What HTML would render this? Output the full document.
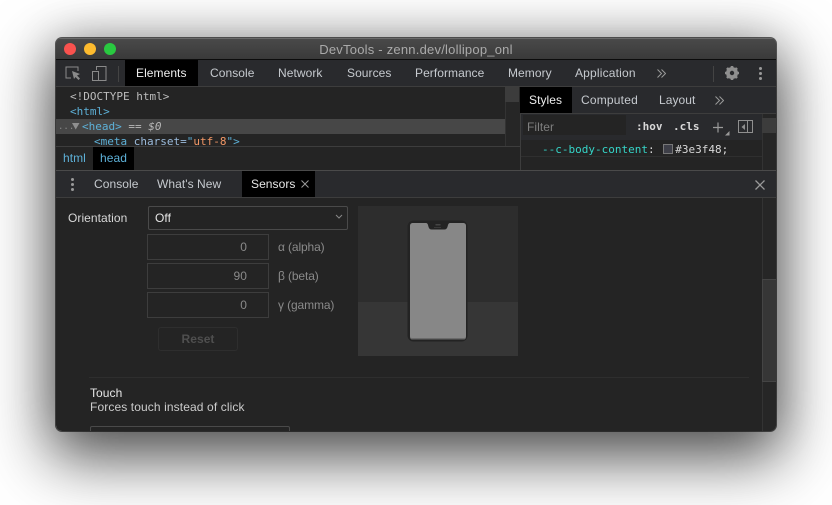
<!DOCTYPE html>
<html><head><meta charset="utf-8"><style>
html,body{margin:0;padding:0;width:832px;height:505px;overflow:hidden;background:#fff}
body{position:relative;font-family:"Liberation Sans",sans-serif;font-size:12px;color:#c6cacf}
div,span.a,svg{position:absolute}
.t{white-space:nowrap;line-height:14px;letter-spacing:.06px}
.m{font-family:"DejaVu Sans Mono","Liberation Mono",monospace;font-size:11px;white-space:nowrap;line-height:14px}
#win{left:56px;top:38px;width:720px;height:393px;border-radius:6px;overflow:hidden;background:#242424}
#shadow{left:56px;top:38px;width:720px;height:393px;border-radius:6px;box-shadow:0 0 0 1px rgba(0,0,0,.6),0 22px 62px 6px rgba(0,0,0,.66),0 0 45px rgba(0,0,0,.16)}
.b{background:#000}
.tag{color:#5db0d7}
.inp{border:1px solid #3d3d3d;box-sizing:border-box;background:#242424}
.g{letter-spacing:-.12px}
</style></head><body>
<div id="shadow"></div>
<div id="win">
<div style="left:0;top:0;width:720px;height:21px;background:linear-gradient(#4a4a4a,#3a3a3a)"></div>
<div style="left:0;top:0;width:720px;height:1px;background:#6a6a6a"></div>
<div style="left:0;top:21px;width:720px;height:1px;background:#0c0c0c"></div>
<div style="left:8px;top:5px;width:12px;height:12px;border-radius:50%;background:#f9524e"></div>
<div style="left:28px;top:5px;width:12px;height:12px;border-radius:50%;background:#fdbb2e"></div>
<div style="left:48px;top:5px;width:12px;height:12px;border-radius:50%;background:#29c940"></div>
<div class="t" style="left:0;width:720px;top:5px;text-align:center;font-size:13px;color:#aaa;letter-spacing:.22px">DevTools - zenn.dev/lollipop_onl</div>

<div style="left:0;top:22px;width:720px;height:26px;background:#292a2d"></div>
<div style="left:0;top:48px;width:720px;height:1px;background:#3d3d3d"></div>
<svg style="left:9px;top:27px" width="18" height="17" viewBox="0 0 18 17" fill="none"><path d="M6 13H1V2h12v4" stroke="#8a8a8a"/><path d="M7 6l8 3-3 1.500 3 3-1.500 1.500-3-3L9 14z" fill="#8a8a8a"/></svg>
<svg style="left:35px;top:27px" width="16" height="17" viewBox="0 0 16 17" fill="none"><path d="M5.500 5V1.500h9.500v14H5" stroke="#8a8a8a"/><rect x="1.500" y="6.500" width="6" height="9" stroke="#8a8a8a"/></svg>
<div style="left:62px;top:28px;width:1px;height:16px;background:#444"></div>
<div class="b" style="left:69px;top:22px;width:73px;height:26px"></div>
<div class="t" style="left:80px;top:28px;color:#eee">Elements</div>
<div class="t" style="left:154px;top:28px">Console</div>
<div class="t" style="left:222px;top:28px">Network</div>
<div class="t" style="left:291px;top:28px">Sources</div>
<div class="t" style="left:359px;top:28px">Performance</div>
<div class="t" style="left:452px;top:28px">Memory</div>
<div class="t" style="left:519px;top:28px;letter-spacing:.18px">Application</div>
<svg style="left:601px;top:31px" width="9" height="9" viewBox="0 0 9 9" fill="none" stroke="#9a9a9a"><path d="M.5.500l4 4-4 4M4.500.5l4 4-4 4"/></svg>
<div style="left:657px;top:28px;width:1px;height:16px;background:#444"></div>
<svg style="left:668px;top:27px" width="16" height="16" viewBox="0 0 16 16"><circle cx="8" cy="8" r="4.500" fill="none" stroke="#8f8f8f" stroke-width="3"/><path d="M8 1v14M1 8h14M3 3l10 10M13 3L3 13" stroke="#8f8f8f" stroke-width="2.600"/><circle cx="8" cy="8" r="2.200" fill="#292a2d"/></svg>
<div style="left:703px;top:29px;width:3px;height:3px;border-radius:50%;background:#9a9a9a"></div>
<div style="left:703px;top:34px;width:3px;height:3px;border-radius:50%;background:#9a9a9a"></div>
<div style="left:703px;top:39px;width:3px;height:3px;border-radius:50%;background:#9a9a9a"></div>

<div style="left:0;top:49px;width:449px;height:59px;background:#242424;overflow:hidden">
<div style="left:0;top:32px;width:449px;height:15px;background:#474747"></div>
<div class="m" style="left:14px;top:3px;color:#bdbdbd">&lt;!DOCTYPE html&gt;</div>
<div class="m tag" style="left:14px;top:18px">&lt;html&gt;</div>
<div class="m" style="left:2px;top:33px;color:#888;font-size:9px">...</div>
<svg style="left:16px;top:36px" width="8" height="7"><path d="M0 0h7.500L3.700 6.500z" fill="#8f8f8f"/></svg>
<div class="m" style="left:26px;top:33px;color:#b8b8b8"><span class="tag">&lt;head&gt;</span> == <i>$0</i></div>
<div class="m" style="left:38px;top:48px;color:#9bbbdc"><span class="tag">&lt;meta</span> charset=<span class="tag">"</span><span style="color:#f29766">utf-8</span><span class="tag">"&gt;</span></div>
</div>
<div style="left:449px;top:49px;width:15px;height:59px;background:#262626;border-left:1px solid #333;box-sizing:border-box"></div>
<div style="left:449px;top:49px;width:14px;height:15px;background:#3c3c3c"></div>
<div style="left:0;top:108px;width:464px;height:1px;background:#3d3d3d"></div>
<div style="left:0;top:109px;width:464px;height:23px;background:#242424"></div>
<div class="b" style="left:37px;top:109px;width:41px;height:23px"></div>
<div class="t" style="left:7px;top:113px;color:#5db0d7">html</div>
<div class="t" style="left:44px;top:113px;color:#5db0d7">head</div>

<div style="left:464px;top:49px;width:1px;height:83px;background:#3d3d3d"></div>
<div style="left:465px;top:49px;width:255px;height:26px;background:#292a2d"></div>
<div class="b" style="left:464px;top:49px;width:52px;height:26px"></div>
<div class="t" style="left:473px;top:55px;color:#eee">Styles</div>
<div class="t" style="left:525px;top:55px;letter-spacing:.2px">Computed</div>
<div class="t" style="left:603px;top:55px">Layout</div>
<svg style="left:659px;top:58px" width="9" height="9" viewBox="0 0 9 9" fill="none" stroke="#9a9a9a"><path d="M.5.500l4 4-4 4M4.500.5l4 4-4 4"/></svg>
<div style="left:465px;top:75px;width:255px;height:1px;background:#3d3d3d"></div>
<div style="left:465px;top:76px;width:241px;height:26px;background:#292a2d"></div>
<div style="left:467px;top:77px;width:103px;height:20px;background:#242424"></div>
<div class="t" style="left:471px;top:82px;color:#7f7f7f">Filter</div>
<div class="m" style="left:580px;top:82px;color:#d8d8d8;font-weight:bold">:hov</div>
<div class="m" style="left:617px;top:82px;color:#d8d8d8;font-weight:bold">.cls</div>
<svg style="left:656px;top:83px" width="18" height="16"><path d="M1 6.500h10M6 1.500v10" stroke="#9a9a9a" stroke-width="1.200"/><path d="M13 14.500h4.500V10z" fill="#9a9a9a"/></svg>
<svg style="left:682px;top:82px" width="15" height="14" fill="none"><rect x=".5" y=".5" width="14" height="12" stroke="#8f8f8f"/><path d="M9.500 1v12" stroke="#8f8f8f"/><path d="M7 4v6L3.500 7z" fill="#8f8f8f"/></svg>
<div style="left:465px;top:102px;width:241px;height:30px;background:#242424"></div>
<div class="m" style="left:486px;top:105px;color:#d8d8d8"><span style="color:#35d4c7">--c-body-content</span>: <span class="a" style="display:inline-block;position:static;width:8px;height:8px;background:#3e3f48;border:1px solid #777;vertical-align:-1px;margin:0 2px 0 2px"></span>#3e3f48;</div>
<div style="left:465px;top:118px;width:241px;height:1px;background:#2f2f2f"></div>
<div style="left:706px;top:76px;width:14px;height:56px;background:#262626;border-left:1px solid #333;box-sizing:border-box"></div>
<div style="left:706px;top:80px;width:14px;height:15px;background:#3c3c3c"></div>

<div style="left:0;top:132px;width:720px;height:1px;background:#4a4a4a"></div>
<div style="left:0;top:133px;width:720px;height:26px;background:#292a2d"></div>
<div style="left:0;top:159px;width:720px;height:1px;background:#3d3d3d"></div>
<div style="left:15px;top:140px;width:3px;height:3px;border-radius:50%;background:#9a9a9a"></div>
<div style="left:15px;top:145px;width:3px;height:3px;border-radius:50%;background:#9a9a9a"></div>
<div style="left:15px;top:150px;width:3px;height:3px;border-radius:50%;background:#9a9a9a"></div>
<div class="t" style="left:38px;top:139px">Console</div>
<div class="t" style="left:101px;top:139px">What's New</div>
<div class="b" style="left:186px;top:133px;width:73px;height:26px"></div>
<div class="t" style="left:195px;top:139px;color:#e6e6e6">Sensors</div>
<svg style="left:245px;top:142px" width="8" height="8"><path d="M.5.500l7 7M7.500.5l-7 7" stroke="#999"/></svg>
<svg style="left:699px;top:142px" width="10" height="10"><path d="M.5.500l9 9M9.500.5l-9 9" stroke="#9a9a9a" stroke-width="1.300"/></svg>

<div class="t" style="left:12px;top:173px;color:#d8d8d8">Orientation</div>
<div class="inp" style="left:92px;top:168px;width:200px;height:24px;border-radius:2px;border-color:#4a4a4a"></div>
<div class="t" style="left:99px;top:173px;color:#e6e6e6">Off</div>
<svg style="left:279px;top:176px" width="8" height="6"><path d="M1 1l3 3 3-3" fill="none" stroke="#888"/></svg>

<div class="inp" style="left:91px;top:196px;width:122px;height:26px"></div>
<div class="t" style="left:91px;top:202px;width:100px;text-align:right;color:#8a8a8a">0</div>
<div class="t g" style="left:222px;top:202px;color:#8a8a8a">α (alpha)</div>
<div class="inp" style="left:91px;top:225px;width:122px;height:26px"></div>
<div class="t" style="left:91px;top:231px;width:100px;text-align:right;color:#8a8a8a">90</div>
<div class="t g" style="left:222px;top:231px;color:#8a8a8a">β (beta)</div>
<div class="inp" style="left:91px;top:254px;width:122px;height:26px"></div>
<div class="t" style="left:91px;top:260px;width:100px;text-align:right;color:#8a8a8a">0</div>
<div class="t g" style="left:222px;top:260px;color:#8a8a8a">γ (gamma)</div>
<div style="left:102px;top:289px;width:80px;height:24px;border:1px solid #2e2e2e;border-radius:3px;box-sizing:border-box"></div>
<div class="t" style="left:102px;top:294px;width:80px;text-align:center;color:#4f4f4f;font-weight:bold">Reset</div>

<div style="left:302px;top:168px;width:160px;height:96px;background:#2d2d2d"></div>
<div style="left:302px;top:264px;width:160px;height:54px;background:#363636"></div>
<svg style="left:351px;top:182px" width="61" height="122" viewBox="0 0 61 122"><rect x=".5" y=".5" width="60" height="121" rx="6" fill="#232323"/><path d="M6 3H19c1 0 1.500.5 2 2 .7 3 1.500 4.500 3.500 4.500h13c2 0 2.800-1.500 3.500-4.500 .5-1.500 1-2 2-2H56c2 0 3 1 3 3v110.500c0 2-1 3-3 3H6c-2 0-3-1-3-3V6c0-2 1-3 3-3z" fill="#878787"/><path d="M3 116.500c0 2 1 3 3 3h50c2 0 3-1 3-3v-.5c0 1.500-1 2-2.500 2h-51C4 118 3 117.500 3 116z" fill="#6a6a6a"/><rect x="28.500" y="4" width="5" height="1.500" fill="#444"/><rect x="27" y="7" width="7" height="1" fill="#3a3a3a"/></svg>

<div style="left:33px;top:339px;width:660px;height:1px;background:#2e2e2e"></div>
<div class="t" style="left:34px;top:348px;color:#e6e6e6">Touch</div>
<div class="t" style="left:34px;top:362px;color:#cccccc;letter-spacing:.11px">Forces touch instead of click</div>
<div class="inp" style="left:34px;top:388px;width:200px;height:24px;border-radius:2px;border-color:#4a4a4a"></div>

<div style="left:706px;top:160px;width:14px;height:233px;background:#262626;border-left:1px solid #333;box-sizing:border-box"></div>
<div style="left:706px;top:241px;width:14px;height:103px;background:#363636;border:1px solid #444;border-right:0;box-sizing:border-box"></div>
</div>
</body></html>
